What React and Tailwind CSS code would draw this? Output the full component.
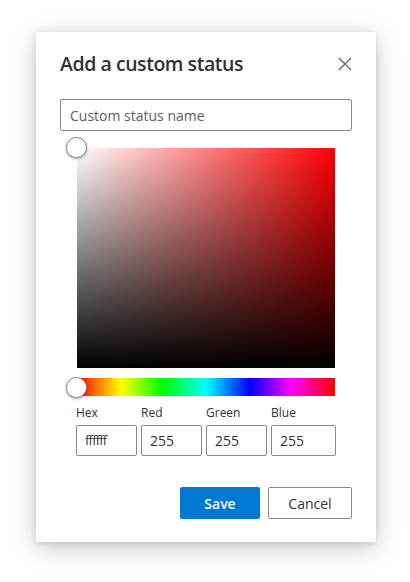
import React from 'react';

const font = { fontFamily: '"Open Sans", "Noto Sans", sans-serif' };

function Knob({ className }) {
  return (
    <div
      className={`absolute w-[21px] h-[21px] rounded-full bg-white border border-[#8a8886] shadow-[0_1px_3px_rgba(0,0,0,0.35)] ${className}`}
    />
  );
}

function Field({ label, value, w, small }) {
  return (
    <div className="flex flex-col">
      <span className="text-[12px] leading-[16px] text-[#323130] mb-[4px]">{label}</span>
      <div className={`${w} h-[31px] border border-[#8a8886] rounded-[2px] flex items-center pl-[8px]`}>
        <span className={small ? 'text-[13px] text-[#323130] tracking-[-0.8px]' : 'text-[14px] text-[#323130]'}>{value}</span>
      </div>
    </div>
  );
}

export default function App() {
  return (
    <div className="w-[410px] h-[582px] bg-white pt-[32px] pl-[36px]" style={font}>
      <div className="w-[340px] h-[510px] bg-white shadow-[0_6px_24px_rgba(0,0,0,0.22),0_1px_6px_rgba(0,0,0,0.12)] pl-[24px] pr-[24px] pt-[18px]">
        <div className="flex items-center justify-between h-[28px]">
          <h1 className="text-[19.5px] font-semibold text-[#323130] leading-[28px] tracking-[-0.45px]">Add a custom status</h1>
          <svg width="14" height="14" viewBox="0 0 14 14">
            <path d="M1 1 L13 13 M13 1 L1 13" stroke="#605e5c" strokeWidth="1.2" fill="none" />
          </svg>
        </div>

        <div className="mt-[21px] w-[292px] h-[32px] border border-[#8a8886] rounded-[2px] flex items-center pl-[9px]">
          <span className="text-[14px] text-[#605e5c]">Custom status name</span>
        </div>

        <div className="relative ml-[17px] mt-[17px] w-[258px] h-[220px]">
          <div className="absolute inset-0 bg-[linear-gradient(to_right,#ffffff,#ff0000)]" />
          <div className="absolute inset-0 bg-[linear-gradient(to_bottom,rgba(0,0,0,0),#000000)]" />
          <Knob className="-left-[11px] -top-[11px]" />
        </div>

        <div className="relative ml-[17px] mt-[10px] w-[258px] h-[18px] bg-[linear-gradient(to_right,#ff0000,#ffff00_17%,#00ff00_33%,#00ffff_50%,#0000ff_67%,#ff00ff_83%,#ff0000)]">
          <Knob className="-left-[11px] top-[-1.5px]" />
        </div>

        <div className="ml-[16px] mt-[9px] flex gap-[4px]">
          <Field label="Hex" value="ffffff" w="w-[61px]" small />
          <Field label="Red" value="255" w="w-[61px]" />
          <Field label="Green" value="255" w="w-[61px]" />
          <Field label="Blue" value="255" w="w-[65px]" />
        </div>

        <div className="mt-[31px] flex justify-end gap-[8px]">
          <button className="w-[80px] h-[32px] bg-[#0078d4] rounded-[2px] text-white text-[14px] font-semibold">Save</button>
          <button className="w-[84px] h-[32px] border border-[#8a8886] rounded-[2px] text-[#323130] text-[14px]">Cancel</button>
        </div>
      </div>
    </div>
  );
}
